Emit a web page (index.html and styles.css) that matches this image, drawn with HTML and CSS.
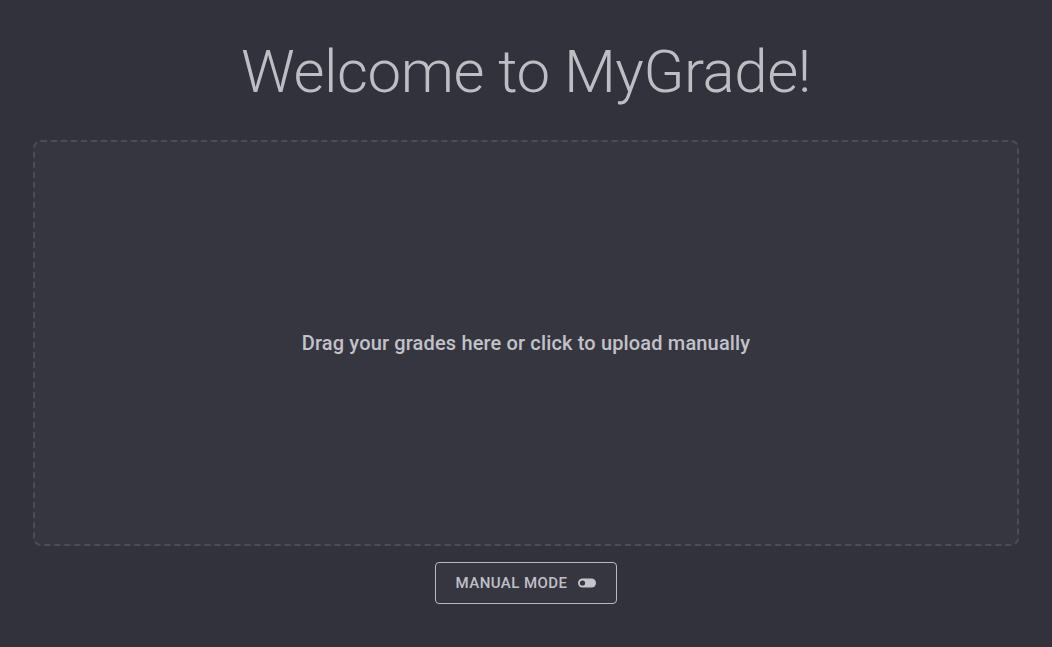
FILE: index.html
```html
<!DOCTYPE html>
<html lang="en">
<head>
<meta charset="utf-8">
<title>MyGrade</title>
<link rel="stylesheet" href="styles.css">
</head>
<body>
<main class="page">
  <h1 class="title">Welcome to MyGrade!</h1>
  <div class="dropzone">
    <p class="dropzone-text">Drag your grades here or click to upload manually</p>
  </div>
  <button class="mode-btn" type="button">
    <span>Manual Mode</span>
    <svg class="toggle" width="18" height="10" viewBox="0 0 18 10" aria-hidden="true">
      <rect x="0" y="0.5" width="18" height="9" rx="4.5" fill="#c4c4cb"/>
      <circle cx="4.5" cy="5" r="2.6" fill="#34343d"/>
    </svg>
  </button>
</main>
</body>
</html>
```
FILE: styles.css
```css
html, body {
  margin: 0;
  padding: 0;
  background: #32323c;
  height: 100%;
}
body {
  font-family: Roboto, "Liberation Sans", sans-serif;
  color: #bfbfc6;
}
.page {
  display: flex;
  flex-direction: column;
  align-items: center;
  padding: 37px 33px 0;
}
.title {
  margin: 0;
  font-size: 60px;
  font-weight: 300;
  line-height: 70px;
  color: #bdbdc3;
  letter-spacing: -0.45px;
}
.dropzone {
  margin-top: 33px;
  align-self: stretch;
  height: 402px;
  border: 2px dashed #4c4c56;
  border-radius: 8px;
  background: #363640;
  display: flex;
  align-items: center;
  justify-content: center;
}
.dropzone-text {
  margin: 0;
  font-size: 20px;
  font-weight: 500;
  color: #c2c2c9;
  letter-spacing: 0.15px;
}
.mode-btn {
  margin-top: 16px;
  width: 182px;
  height: 42px;
  border: 1px solid #b9b9c0;
  border-radius: 4px;
  background: #363640;
  color: #c0c0c7;
  font-family: Roboto, "Liberation Sans", sans-serif;
  font-size: 15px;
  font-weight: 500;
  letter-spacing: 0.45px;
  text-transform: uppercase;
  display: flex;
  align-items: center;
  justify-content: center;
  gap: 11px;
  padding: 0;
}
.toggle {
  display: block;
}
```
